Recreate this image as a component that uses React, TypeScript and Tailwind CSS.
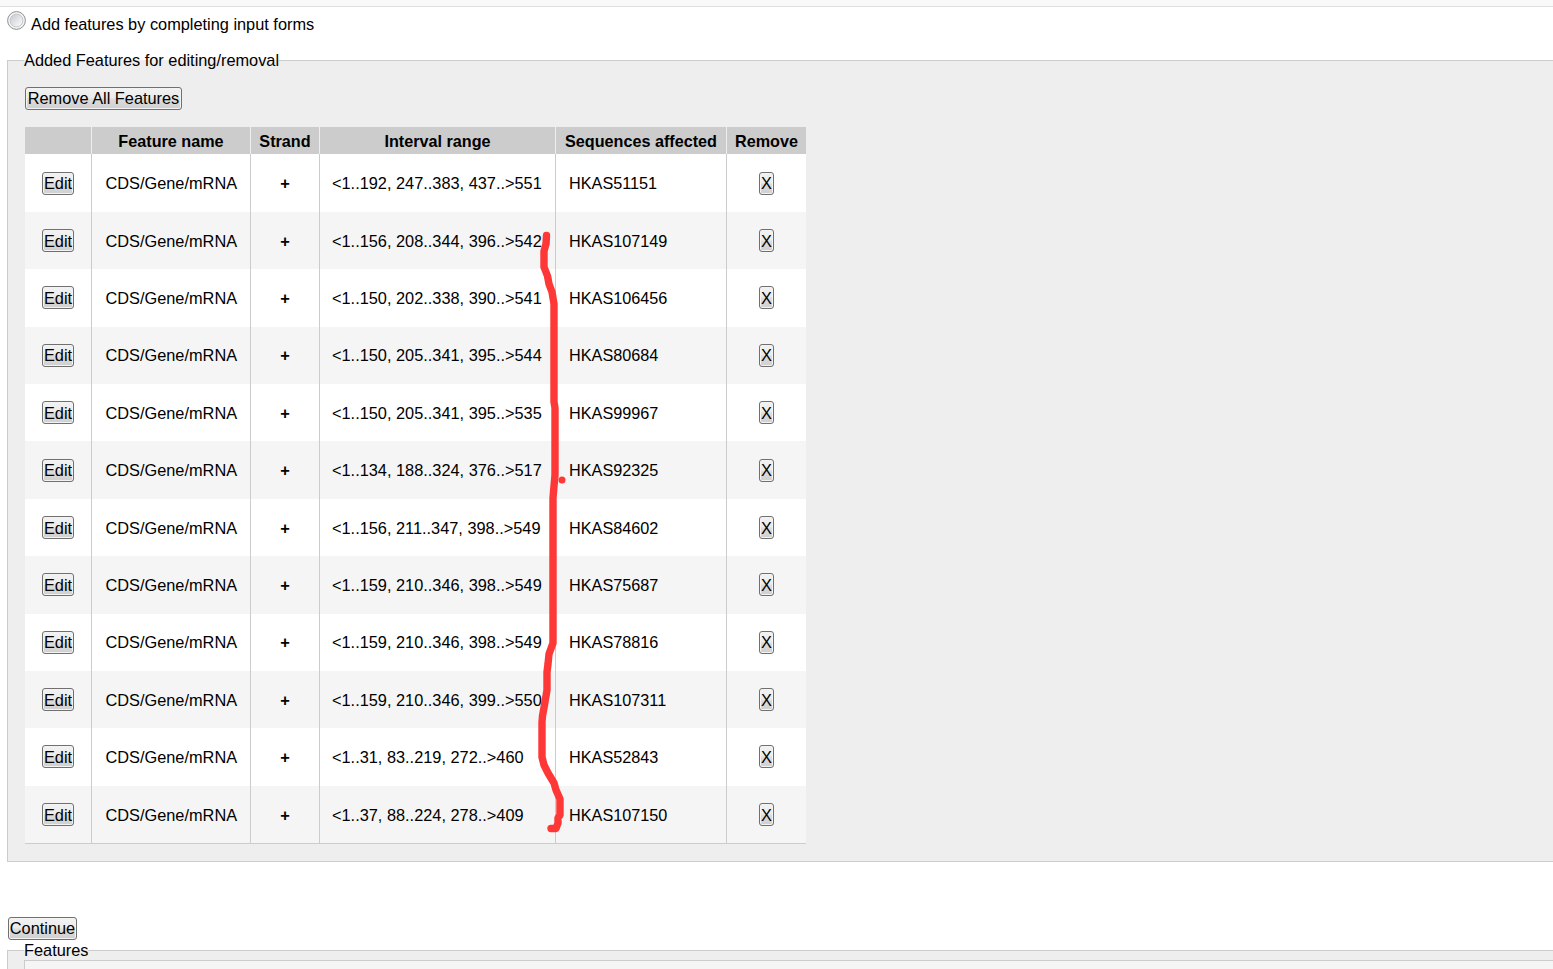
import type { ReactNode } from 'react';

type Feature = { range: string; sequence: string };

const features: Feature[] = [
  { range: '<1..192, 247..383, 437..>551', sequence: 'HKAS51151' },
  { range: '<1..156, 208..344, 396..>542', sequence: 'HKAS107149' },
  { range: '<1..150, 202..338, 390..>541', sequence: 'HKAS106456' },
  { range: '<1..150, 205..341, 395..>544', sequence: 'HKAS80684' },
  { range: '<1..150, 205..341, 395..>535', sequence: 'HKAS99967' },
  { range: '<1..134, 188..324, 376..>517', sequence: 'HKAS92325' },
  { range: '<1..156, 211..347, 398..>549', sequence: 'HKAS84602' },
  { range: '<1..159, 210..346, 398..>549', sequence: 'HKAS75687' },
  { range: '<1..159, 210..346, 398..>549', sequence: 'HKAS78816' },
  { range: '<1..159, 210..346, 399..>550', sequence: 'HKAS107311' },
  { range: '<1..31, 83..219, 272..>460', sequence: 'HKAS52843' },
  { range: '<1..37, 88..224, 278..>409', sequence: 'HKAS107150' },
];

const columns = 'grid grid-cols-[67px_159px_69px_236px_171px_79px]';
const headCell = 'flex items-center justify-center border-r border-[#eeeeee] pt-[2px]';
const cell = 'flex items-center border-r border-[#cccccc]';
const textCell = `${cell} whitespace-nowrap pt-[1.4px]`;

function Button({ children, className }: { children: ReactNode; className: string }) {
  return (
    <button
      type="button"
      className={`flex h-[23px] shrink-0 items-center justify-center whitespace-nowrap rounded-[3px] border border-[#707070] bg-[linear-gradient(#f2f2f2_0%,#ebebeb_48%,#dddddd_52%,#cfcfcf_100%)] leading-[19px] shadow-[inset_0_0_0_1px_#f3f3f3] ${className}`}
    >
      {children}
    </button>
  );
}

function FeatureTable() {
  return (
    <div className="w-[781px] border-b border-[#cccccc]">
      <div className={`${columns} h-[27.4px] bg-[#cccccc] text-[16.2px] font-bold`}>
        <div className={headCell} />
        <div className={headCell}>Feature name</div>
        <div className={headCell}>Strand</div>
        <div className={headCell}>Interval range</div>
        <div className={headCell}>Sequences affected</div>
        <div className="flex items-center justify-center pt-[2px]">Remove</div>
      </div>
      {features.map((feature) => (
        <div key={feature.sequence} className={`${columns} h-[57.4px] even:bg-white odd:bg-[#f5f5f5]`}>
          <div className={`${cell} pl-[17px]`}>
            <Button className="w-[32px] pt-[1.4px]">Edit</Button>
          </div>
          <div className={`${textCell} pl-[13.5px]`}>CDS/Gene/mRNA</div>
          <div className={`${textCell} justify-center font-bold`}>+</div>
          <div className={`${textCell} pl-[12px]`}>{feature.range}</div>
          <div className={`${textCell} pl-[13px] text-[16.24px]`}>{feature.sequence}</div>
          <div className="flex items-center justify-center">
            <Button className="w-[15px] pt-[1.4px]">X</Button>
          </div>
        </div>
      ))}
    </div>
  );
}

function RedPenStroke() {
  return (
    <svg
      className="pointer-events-none absolute left-0 top-0"
      width="620"
      height="850"
      viewBox="0 0 620 850"
      fill="none"
      stroke="#fe3737"
      strokeLinecap="round"
      strokeLinejoin="round"
    >
      <path
        strokeWidth="7.4"
        d="M546.5 235.5L546 244L544 251V267L547.5 276L549 284L552 292L554 304V402L555 408V475L554 486L553 498V643L549 654L548 664L547 672V690L545 702L542.5 716L542 722V757L544 765L548 773L554 783L556 790L560 799V815L558 818V823L556 828.5H551"
      />
      <circle cx="562" cy="480" r="3.5" fill="#fe3737" stroke="none" />
    </svg>
  );
}

export default function App() {
  return (
    <main className="relative flex h-[969px] w-full flex-col overflow-hidden bg-white font-['Liberation_Sans',Arial,sans-serif] text-[16.34px] leading-[19px] text-black">
      <div className="h-[7px] shrink-0 border-b border-[#e0e0e0] bg-[#f9f9f9]" />
      <label className="flex h-[44px] shrink-0 pl-[7px] pt-[4px]">
        <svg width="19" height="19" viewBox="0 0 19 19">
          <defs>
            <linearGradient id="radio" x1="0" y1="0" x2="1" y2="1">
              <stop offset="0.1" stopColor="#c9cdd2" />
              <stop offset="0.85" stopColor="#f7f7f7" />
            </linearGradient>
          </defs>
          <circle cx="9.5" cy="9.5" r="8.9" fill="#f4f4f4" stroke="#8e8f8f" />
          <circle cx="9.5" cy="9.5" r="6.4" fill="url(#radio)" stroke="#c5c8cb" />
        </svg>
        <span className="pl-[5px] pt-[4px]">Add features by completing input forms</span>
      </label>

      <fieldset className="ml-[7px] h-[811px] shrink-0 border border-r-0 border-[#cccccc] bg-[#eeeeee] pl-[17px]">
        <legend className="-ml-px h-[19px] leading-[19px]">Added Features for editing/removal</legend>
        <div className="flex flex-col items-start gap-[17px] pt-[17px]">
          <Button className="w-[157px]">Remove All Features</Button>
          <FeatureTable />
        </div>
      </fieldset>

      <div className="flex h-[79px] shrink-0 items-start pl-[8px] pt-[55px]">
        <Button className="w-[69px]">Continue</Button>
      </div>

      <fieldset className="ml-[7px] h-[40px] shrink-0 border border-r-0 border-[#cccccc] bg-[#eeeeee] pl-[16px]">
        <legend className="h-[19px] leading-[19px]">Features</legend>
        <div className="h-[20px] border-l border-t border-[#cccccc] bg-[#f5f5f5]" />
      </fieldset>

      <RedPenStroke />
    </main>
  );
}
